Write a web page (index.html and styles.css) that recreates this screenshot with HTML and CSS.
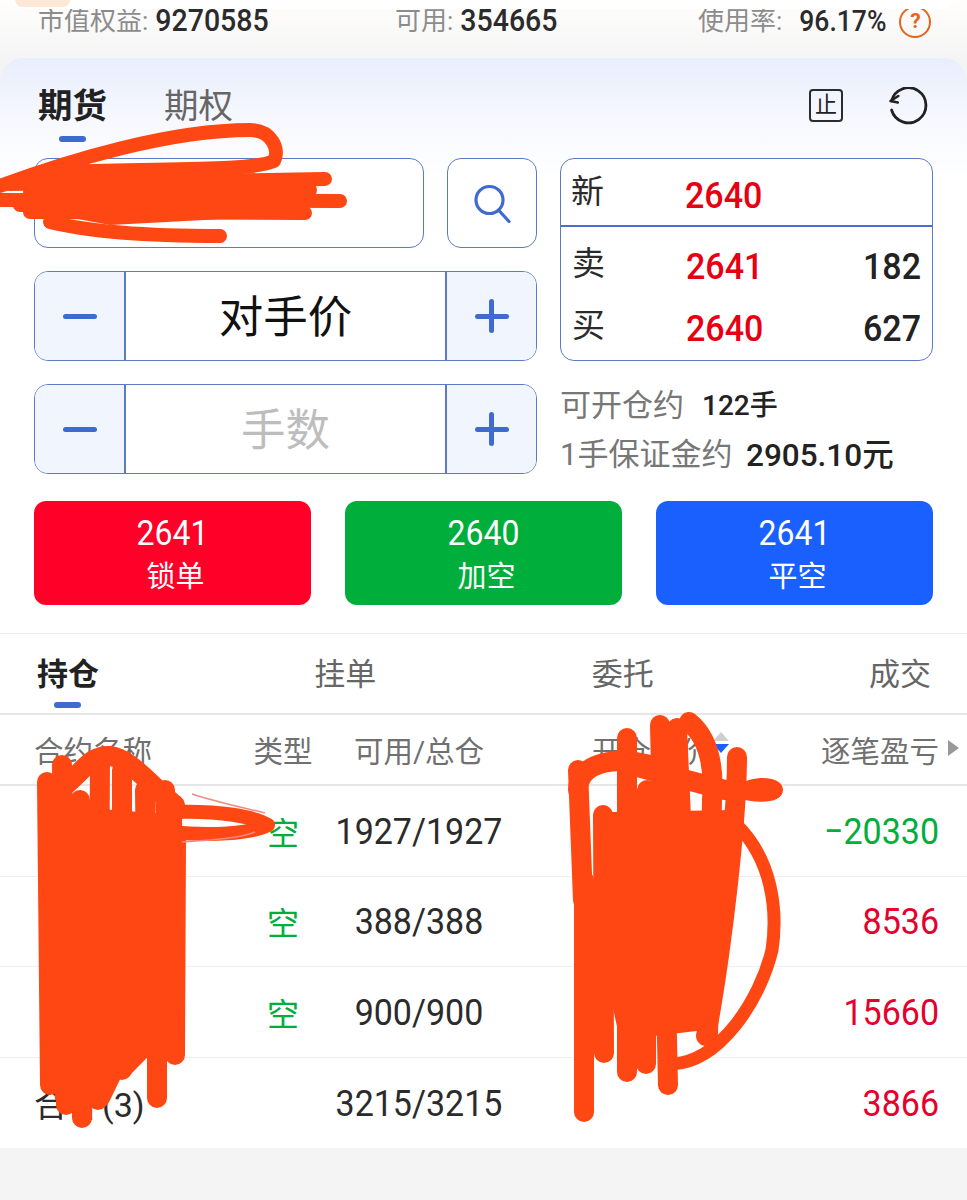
FILE: index.html
```html
<!DOCTYPE html>
<html lang="zh-CN">
<head>
<meta charset="utf-8">
<title>期货交易</title>
<link rel="stylesheet" href="styles.css">
</head>
<body>
<div class="page">
  <header class="account">
    <div class="notice"><span class="notice-tint"></span></div>
    <div class="stats">
      <div class="stat"><span class="stat-label">市值权益:</span><b>9270585</b></div>
      <div class="stat"><span class="stat-label">可用:</span><b>354665</b></div>
      <div class="stat"><span class="stat-label">使用率:</span><b class="stat-small">96.17%</b><span class="help">?</span></div>
    </div>
  </header>

  <main class="panel">
    <div class="market-bar">
      <div class="market-tabs">
        <div class="market-tab active">期货</div>
        <div class="market-tab">期权</div>
      </div>
      <div class="tools">
        <span class="zheng">止</span>
        <svg class="refresh" viewBox="0 0 40 40" width="40" height="40"><path d="M3.600 23A17.500 17.500 0 1 0 3.500 14" fill="none" stroke="#222" stroke-width="2.800" stroke-linecap="round"/><path d="M10.300 9L2.500 14L9.800 15.500" fill="none" stroke="#222" stroke-width="2.600" stroke-linecap="round" stroke-linejoin="round"/></svg>
      </div>
    </div>

    <div class="order-grid">
      <div class="order-left">
        <div class="search-row">
          <div class="contract-box"></div>
          <div class="search-btn">
            <svg viewBox="0 0 40 40" width="40" height="40"><circle cx="17.500" cy="17" r="13.500" fill="none" stroke="#3f6bd0" stroke-width="3.200"/><path d="M26.500 27L37 38.500" fill="none" stroke="#3f6bd0" stroke-width="3.200" stroke-linecap="round"/></svg>
          </div>
        </div>
        <div class="stepper">
          <div class="step"><span class="minus"></span></div>
          <div class="step-value"><span>对手价</span></div>
          <div class="step"><span class="plus"></span></div>
        </div>
        <div class="stepper">
          <div class="step"><span class="minus"></span></div>
          <div class="step-value placeholder"><span>手数</span></div>
          <div class="step"><span class="plus"></span></div>
        </div>
      </div>

      <div class="order-right">
        <div class="quote">
          <div class="quote-last">
            <span class="q-label">新</span><span class="q-price">2640</span><span class="q-vol"></span>
          </div>
          <div class="quote-book">
            <div class="quote-row"><span class="q-label">卖</span><span class="q-price">2641</span><span class="q-vol">182</span></div>
            <div class="quote-row"><span class="q-label">买</span><span class="q-price">2640</span><span class="q-vol">627</span></div>
          </div>
        </div>
        <div class="info">
          <div class="info-line"><span class="info-label">可开仓约</span><span class="info-val small">122手</span></div>
          <div class="info-line"><span class="info-label tight">1手保证金约</span><span class="info-val">2905.10元</span></div>
        </div>
      </div>
    </div>

    <div class="actions">
      <div class="action red"><span class="a-price">2641</span><span class="a-name">锁单</span></div>
      <div class="action green"><span class="a-price">2640</span><span class="a-name">加空</span></div>
      <div class="action blue"><span class="a-price">2641</span><span class="a-name">平空</span></div>
    </div>
  </main>

  <section class="positions">
    <nav class="pos-tabs">
      <div class="pos-tab active">持仓</div>
      <div class="pos-tab">挂单</div>
      <div class="pos-tab">委托</div>
      <div class="pos-tab">成交</div>
    </nav>
    <div class="thead">
      <span class="c-name">合约名称</span>
      <span class="c-type">类型</span>
      <span class="c-qty">可用/总仓</span>
      <span class="c-open">开仓均价<i class="sort"></i></span>
      <span class="c-pnl">逐笔盈亏<i class="more"></i></span>
    </div>
    <div class="row">
      <span class="c-name"></span><span class="c-type short">空</span><span class="c-qty num">1927/1927</span><span class="c-open"></span><span class="c-pnl down num">−20330</span>
    </div>
    <div class="row">
      <span class="c-name"></span><span class="c-type short">空</span><span class="c-qty num">388/388</span><span class="c-open"></span><span class="c-pnl up num">8536</span>
    </div>
    <div class="row">
      <span class="c-name"></span><span class="c-type short">空</span><span class="c-qty num">900/900</span><span class="c-open"></span><span class="c-pnl up num">15660</span>
    </div>
    <div class="row total">
      <span class="c-name">合计(3)</span><span class="c-type"></span><span class="c-qty num">3215/3215</span><span class="c-open"></span><span class="c-pnl up num">3866</span>
    </div>
  </section>
  <div class="foot"></div>

  <svg class="scribble" viewBox="0 0 967 1200" width="967" height="1200" aria-hidden="true">
    <g class="ink thin">
      <path d="M0 186C70 160 170 130 250 130C272 130 280 150 274 161C250 172 150 168 70 172"/>
      <path d="M0 200L340 201"/>
      <path d="M10 184L325 179"/>
      <path d="M30 192L310 190"/>
      <path d="M30 212L305 213"/>
      <path d="M35 176L200 178"/>
      <path d="M20 205L160 206"/>
      <path d="M50 222C90 232 150 236 220 236"/>
      <path d="M170 812C220 810 255 817 268 825C250 834 210 836 170 832"/>
    </g>
    <path class="ink-fill" d="M60 182L270 180L300 215L110 225L30 210Z"/>
    <g class="ink wide">
      <path d="M47 782L50 1085"/>
      <path d="M62 765L66 1105"/>
      <path d="M80 800L82 1118"/>
      <path d="M100 760L98 1100"/>
      <path d="M122 770L122 1070"/>
      <path d="M145 790L148 1040"/>
      <path d="M165 790L170 1030"/>
      <path d="M176 840L175 1055"/>
      <path d="M157 1000L157 1098"/>
      <path d="M60 790C85 770 90 755 110 756C130 758 150 785 175 805"/>
      <path d="M128 1040L100 1098"/>
    </g>
    <path class="ink-fill" d="M45 805L182 815L184 1020L130 1075L55 1100Z"/>
    <g class="ink wide">
      <path d="M578 790C578 765 610 755 650 765"/>
      <path d="M578 770L583 900"/>
      <path d="M584 880L584 1112"/>
      <path d="M603 815L604 1053"/>
      <path d="M627 738L627 1072"/>
      <path d="M647 790L646 1064"/>
      <path d="M660 725L668 1085"/>
      <path d="M677 728L690 1020"/>
      <path d="M689 722C705 735 715 760 712 800L708 1036"/>
      <path d="M737 757C737 820 722 950 706 1036"/>
      <path d="M630 765L725 790"/>
    </g>
    <path class="ink-blob" d="M738 785C755 774 783 776 783 790C783 804 755 804 738 798Z"/>
    <path class="ink arc" d="M737 825C772 860 778 910 772 950C760 1000 720 1062 672 1064"/>
    <path class="ink-fill" d="M612 812L735 810L726 920L705 1030L620 1040L600 950Z"/>
    <path class="pink" d="M192 794C220 803 245 808 265 813M182 842C215 840 240 838 255 832"/>
  </svg>
</div>
</body>
</html>
```
FILE: styles.css
```css
* { box-sizing: border-box; }
html, body { margin: 0; padding: 0; }
body { font-family: Roboto, "Noto Sans CJK SC", sans-serif; background: #f4f4f4; color: #222; }
.page { position: relative; width: 967px; height: 1200px; overflow: hidden; }

.account { height: 58px; background: linear-gradient(#fffefd, #f5f5f5); }
.notice { position: relative; z-index: 1; height: 9px; margin: 0 15px; background: #fff; border-radius: 0 0 12px 12px; overflow: hidden; }
.notice-tint { display: block; width: 55px; height: 7px; background: #fde8d8; border-radius: 0 0 8px 8px; }
.stats { display: grid; grid-template-columns: 357px 303px auto; padding: 0 0 0 38px; height: 26px; margin-top: -3px; line-height: 30px; }
.stat { display: flex; align-items: center; height: 30px; font-size: 26px; white-space: nowrap; }
.stat-label { color: #8c8c8c; }
.stat b { font-weight: 500; font-size: 28.500px; color: #2b2b2b; margin-left: 7px; transform: scaleY(1.08); }
.stat b.stat-small { font-size: 26.500px; margin-left: 17px; }
.help { flex: none; width: 32px; height: 32px; margin: 1px 0 0 13px; border: 2.500px solid #e8621a; border-radius: 50%; color: #e8621a; font-size: 21px; font-weight: 700; line-height: 27px; text-align: center; }

.panel { height: 575px; background: linear-gradient(#e8eefc 0, #f6f8fe 60px, #fff 120px); border-radius: 24px 24px 0 0; padding: 0 34px; }
.market-bar { height: 100px; display: flex; justify-content: space-between; align-items: flex-start; padding-left: 4px; }
.market-tabs { display: flex; gap: 57px; }
.market-tab { position: relative; font-size: 34.500px; line-height: 48px; margin-top: 24px; color: #666; }
.market-tab.active { color: #222; font-weight: 700; }
.market-tab.active::after { content: ""; position: absolute; left: 21px; top: 54px; width: 27px; height: 6px; border-radius: 3px; background: #3f6bd0; }
.tools { display: flex; align-items: center; gap: 45px; margin-top: 26px; margin-right: 5px; }
.zheng { width: 34px; height: 33px; border: 2.500px solid #2b2b2b; border-radius: 4px; font-size: 22px; line-height: 27px; text-align: center; color: #222; }
.refresh { display: block; margin-top: 3px; }

.order-grid { display: grid; grid-template-columns: 503px 373px; column-gap: 23px; height: 343px; }
.order-left { display: flex; flex-direction: column; gap: 23px; }
.search-row { display: flex; gap: 23px; height: 90px; }
.contract-box { width: 390px; background: #fff; border: 1px solid #5b7cc4; border-radius: 14px; }
.search-btn { width: 90px; display: flex; align-items: center; justify-content: center; background: #fff; border: 1px solid #5b7cc4; border-radius: 14px; }
.stepper { display: grid; grid-template-columns: 91px 1fr 91px; height: 90px; border: 1px solid #5b7cc4; border-radius: 14px; overflow: hidden; background: #fff; }
.step { display: flex; align-items: center; justify-content: center; background: #f1f5fd; }
.step:first-child { border-right: 2px solid #5b7cc4; }
.step:last-child { border-left: 2px solid #5b7cc4; }
.minus, .plus { position: relative; display: block; width: 34px; height: 5px; border-radius: 3px; background: #3f6bd0; }
.plus::after { content: ""; position: absolute; left: 14.500px; top: -14.500px; width: 5px; height: 34px; border-radius: 3px; background: #3f6bd0; }
.step-value { display: flex; align-items: center; justify-content: center; font-size: 44.500px; padding-bottom: 5px; color: #111; }
.step-value.placeholder { color: #bdbdbd; }

.order-right { display: flex; flex-direction: column; }
.quote { height: 203px; border: 1px solid #5b7cc4; border-radius: 14px; background: #fff; }
.quote-last { display: grid; grid-template-columns: 114px 1fr auto; align-items: center; height: 68px; padding: 0 11px 0 10px; border-bottom: 2px solid #4a6fc8; }
.quote-book { display: flex; flex-direction: column; padding-top: 8px; }
.quote-row { display: grid; grid-template-columns: 114px 1fr auto; align-items: center; height: 62px; padding: 0 11px 0 11px; }
.q-label { font-size: 33px; color: #2b2b2b; margin-bottom: 5px; line-height: 40px; }
.quote-last .q-label { margin-bottom: 0; }
.q-price { font-size: 34px; color: #e60012; transform: scaleY(1.1); font-weight: 500; }
.quote-last .q-price { margin-top: 5px; }
.q-vol { font-size: 34px; font-weight: 500; color: #222; transform: scaleY(1.1); }
.info { padding-top: 17px; }
.info-line { display: flex; align-items: center; height: 49px; }
.info-label { font-size: 31px; color: #777; width: 142px; }
.info-label.tight { width: 186px; }
.info-val { font-size: 31.500px; font-weight: 500; color: #222; }
.info-val.small { font-size: 28px; }

.actions { display: grid; grid-template-columns: repeat(3, 277px); column-gap: 34px; }
.action { display: flex; flex-direction: column; align-items: center; height: 104px; border-radius: 12px; color: #fff; padding-top: 12px; }
.red { background: #ff0028; }
.green { background: #00ae3b; }
.blue { background: #1a60ff; }
.a-price { font-size: 32px; line-height: 40px; transform: scaleY(1.08); }
.a-name { font-size: 29px; line-height: 42px; margin-top: 3px; margin-left: 6px; }

.positions { background: #fff; border-top: 1px solid #ececec; }
.pos-tabs { display: flex; justify-content: space-between; height: 81px; padding: 0 36px 0 37px; border-bottom: 2px solid #e6e6e6; }
.pos-tab { position: relative; font-size: 31px; line-height: 82px; color: #666; }
.pos-tab.active { color: #222; font-weight: 700; }
.pos-tab.active::after { content: ""; position: absolute; left: 17px; top: 68px; width: 27px; height: 6px; border-radius: 3px; background: #3f6bd0; }

.thead, .row { display: grid; grid-template-columns: 200px 98px 174px 1fr auto; align-items: center; padding: 0 28px 0 34px; }
.thead { height: 71px; font-size: 29.500px; color: #707070; border-bottom: 2px solid #e6e6e6; padding-bottom: 2px; }
.row { height: 90.500px; font-size: 34px; color: #2b2b2b; border-bottom: 1px solid #eee; }
.row.total { border-bottom: 0; }
.c-type, .c-qty { text-align: center; }
.c-open { position: relative; padding-left: 86px; white-space: nowrap; }
.c-pnl { text-align: right; position: relative; }
.num { transform: scaleY(1.1); }
.short { color: #00ae3b; font-size: 32px; }
.up { color: #e6002d; }
.down { color: #00ae3b; }
.sort { position: absolute; left: 207px; top: 4px; width: 0; height: 0; }
.sort::before, .sort::after { content: ""; position: absolute; left: 0; border-left: 8px solid transparent; border-right: 8px solid transparent; }
.sort::before { top: 0; border-bottom: 9px solid #cfcfcf; }
.sort::after { top: 12px; border-top: 9px solid #1a60ff; }
.more { position: absolute; right: -20px; top: 12px; width: 0; height: 0; border-top: 8px solid transparent; border-bottom: 8px solid transparent; border-left: 11px solid #999; }
.foot { height: 53px; background: #f4f4f4; }

.scribble { position: absolute; left: 0; top: 0; pointer-events: none; }
.ink { fill: none; stroke: #ff4713; stroke-width: 16px; stroke-linecap: round; stroke-linejoin: round; }
.ink.thin { stroke-width: 14px; }
.ink.wide { stroke-width: 20px; }
.ink.arc { stroke-width: 13px; }
.ink-fill, .ink-blob { fill: #ff4713; }
.pink { fill: none; stroke: #f08a80; stroke-width: 1.500px; }
```
